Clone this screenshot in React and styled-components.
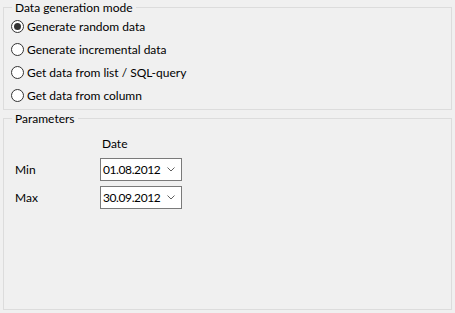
import React, {useState} from "react";
import styled, {createGlobalStyle} from "styled-components";

const GlobalStyle = createGlobalStyle`
    html, body {
        margin: 0;
        padding: 0;
        background: #f0f0f0;
    }
    body {
        font-family: "Segoe UI", Lato, "Liberation Sans", Arial, sans-serif;
        font-size: 12px;
        color: #000;
    }
`;

const Page = styled.div`
    display: flex;
    flex-direction: column;
    gap: 1px;
    width: 455px;
    height: 313px;
    box-sizing: border-box;
    padding: 0 3px 3px 3px;
`;

const GroupBox = styled.fieldset`
    margin: 0;
    padding: 0 0 ${(p) => p.$bottom || 0}px 0;
    border: 1px solid #dcdcdc;
    min-width: 0;
    flex: ${(p) => (p.$grow ? 1 : "none")};
`;

const Legend = styled.legend`
    margin-left: 8px;
    padding: 0 3px;
    font-size: 12px;
    line-height: 15px;
`;

const RadioList = styled.div`
    display: flex;
    flex-direction: column;
    gap: 8px;
    padding: 4px 0 0 7px;
`;

const RadioRow = styled.label`
    display: flex;
    align-items: center;
    gap: 3px;
    height: 15px;
    line-height: 15px;
    cursor: default;
`;

const RadioMark = styled.span`
    position: relative;
    width: 13px;
    height: 13px;
    box-sizing: border-box;
    border: 1px solid #333;
    border-radius: 50%;
    background: #fff;
    flex: none;

    &::after {
        content: "";
        display: ${(p) => (p.$checked ? "block" : "none")};
        position: absolute;
        left: 2px;
        top: 2px;
        width: 7px;
        height: 7px;
        border-radius: 50%;
        background: #333;
    }
`;

const ParamGrid = styled.div`
    display: grid;
    grid-template-columns: 85px 82px;
    grid-template-rows: 17px;
    grid-auto-rows: 23px;
    row-gap: 5px;
    align-items: center;
    padding: 10px 0 0 11px;
`;

const HeaderCell = styled.span`
    align-self: start;
    padding-left: 2px;
    line-height: 15px;
`;

const RowLabel = styled.span`
    line-height: 15px;
`;

const Combo = styled.div`
    display: flex;
    align-items: center;
    justify-content: space-between;
    height: 23px;
    box-sizing: border-box;
    border: 1px solid #7a7a7a;
    background: #fff;
    padding: 0 6px 0 2px;
`;

const ComboText = styled.span`
    line-height: 15px;
    letter-spacing: -0.4px;
`;

const Chevron = () => (
    <svg width="8" height="5" viewBox="0 0 8 5">
        <path d="M0.5 0.5 L4 4 L7.5 0.5" fill="none" stroke="#606060" strokeWidth="1" />
    </svg>
);

const modes = [
    "Generate random data",
    "Generate incremental data",
    "Get data from list / SQL-query",
    "Get data from column",
];

const params = [
    {label: "Min", value: "01.08.2012"},
    {label: "Max", value: "30.09.2012"},
];

export default function App() {
    const [mode, setMode] = useState(0);
    return (
        <Page>
            <GlobalStyle />
            <GroupBox $bottom={6}>
                <Legend>Data generation mode</Legend>
                <RadioList>
                    {modes.map((m, idx) => (
                        <RadioRow key={idx} onClick={() => setMode(idx)}>
                            <RadioMark $checked={mode === idx} />
                            {m}
                        </RadioRow>
                    ))}
                </RadioList>
            </GroupBox>
            <GroupBox $grow>
                <Legend>Parameters</Legend>
                <ParamGrid>
                    <span />
                    <HeaderCell>Date</HeaderCell>
                    {params.map((p) => (
                        <React.Fragment key={p.label}>
                            <RowLabel>{p.label}</RowLabel>
                            <Combo>
                                <ComboText>{p.value}</ComboText>
                                <Chevron />
                            </Combo>
                        </React.Fragment>
                    ))}
                </ParamGrid>
            </GroupBox>
        </Page>
    );
}
